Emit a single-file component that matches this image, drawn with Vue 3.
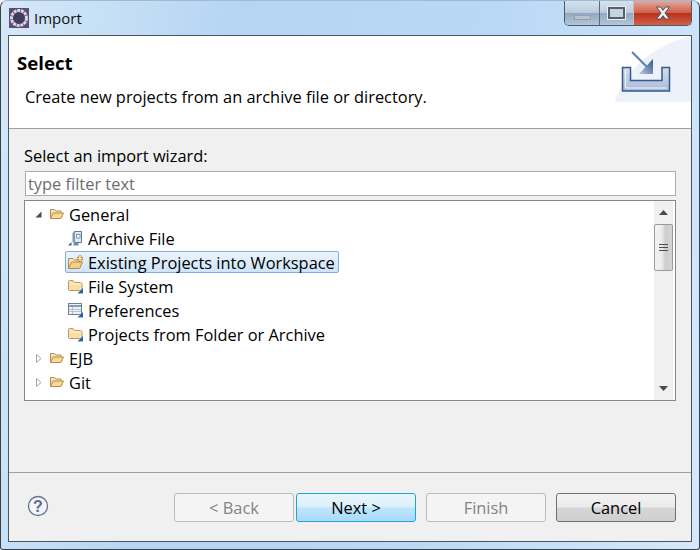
<script setup>
const rows = [
  { label: 'General', level: 0, twist: 'open', icon: 'openFolder' },
  { label: 'Archive File', level: 1, icon: 'archive' },
  { label: 'Existing Projects into Workspace', level: 1, icon: 'project', selected: true },
  { label: 'File System', level: 1, icon: 'folder' },
  { label: 'Preferences', level: 1, icon: 'prefs' },
  { label: 'Projects from Folder or Archive', level: 1, icon: 'folder' },
  { label: 'EJB', level: 0, twist: 'closed', icon: 'openFolder' },
  { label: 'Git', level: 0, twist: 'closed', icon: 'openFolder' }
]
</script>

<template>
  <div class="window">
    <div class="titlebar">
      <svg class="app-icon" width="20" height="20" viewBox="0 0 20 20">
        <rect width="20" height="20" fill="#5d4a7e" />
        <circle cx="10" cy="10" r="7.5" fill="none" stroke="#d8d8d4" stroke-width="3" stroke-dasharray="3 0.7" />
        <circle cx="10" cy="10" r="5.6" fill="#3f3d5c" />
      </svg>
      <span class="window-title">Import</span>
      <div class="controls">
        <div class="ctl ctl-min"><span class="min-glyph"></span></div>
        <div class="ctl ctl-max"><span class="max-glyph"></span></div>
        <div class="ctl ctl-close">
          <svg width="16" height="14" viewBox="0 0 16 14">
            <path d="M1.500 1h4l2.500 3.300L10.500 1h4L10 7l4.500 6h-4L8 9.700 5.500 13h-4L6 7z" fill="#eef0f2" stroke="#4a4f58" stroke-width="1" />
          </svg>
        </div>
      </div>
    </div>

    <div class="client">
      <header class="banner">
        <div class="banner-text">
          <h1>Select</h1>
          <p>Create new projects from an archive file or directory.</p>
        </div>
        <div class="banner-art">
          <svg width="76" height="66" viewBox="0 0 76 66">
            <defs>
              <linearGradient id="tray" x1="0" y1="0" x2="0" y2="1">
                <stop offset="0" stop-color="#d5deec" />
                <stop offset="1" stop-color="#a9bbd6" />
              </linearGradient>
              <linearGradient id="arrow" x1="0" y1="1" x2="1" y2="0">
                <stop offset="0" stop-color="#b8c8e0" />
                <stop offset="1" stop-color="#2f5590" />
              </linearGradient>
            </defs>
            <path d="M0 66 C6 42 30 12 76 0 V66z" fill="#edf1f9" />
            <path d="M7.500 31.500h8v13h31.500v-13h7.500v23.500h-47z" fill="url(#tray)" stroke="#35588f" stroke-width="1.500" />
            <path d="M10.500 34.500v17.500h41" fill="none" stroke="#eef2f8" stroke-width="1" />
            <path d="M17 16l15 15" stroke="#5d7cab" stroke-width="2" />
            <path d="M38 23v15H24z" fill="url(#arrow)" />
          </svg>
        </div>
      </header>

      <main class="body">
        <label class="field-label">Select an import wizard:</label>
        <div class="filter">type filter text</div>
        <div class="tree">
          <div class="tree-rows">
            <div v-for="row in rows" :key="row.label" class="row" :class="`level-${row.level}`">
              <span v-if="row.level === 0" class="twist">
                <svg width="9" height="9" viewBox="0 0 9 9">
                  <path v-if="row.twist === 'open'" d="M7.500 1.500v6h-6z" fill="#4a4a4a" />
                  <path v-else d="M2.500 0.500l4.500 4-4.500 4z" fill="#fff" stroke="#a6a6a6" />
                </svg>
              </span>
              <span class="cell" :class="{ selected: row.selected }">
                <span class="icon">
                  <svg width="16" height="16" viewBox="0 0 16 16">
                    <template v-if="row.icon === 'openFolder'">
                      <path d="M1.500 12.500v-9h4l1.500 1.500h5v2" fill="#f6e2bd" stroke="#bd8a45" />
                      <path d="M1.500 12.500l2.500-5.500h10.500l-2.500 5.500z" fill="#f7d99c" stroke="#bd8a45" />
                    </template>
                    <template v-else-if="row.icon === 'archive'">
                      <path d="M6.500 1.500h7v11h-7z" fill="#dfe8f2" stroke="#5f7895" />
                      <path d="M4.500 2.500h2.500v10H4.500z" fill="#7f97b5" />
                      <rect x="8.500" y="4.500" width="3.500" height="3.500" fill="#fff" stroke="#7f97b5" />
                      <path d="M0 15.500l3.500-3.500v3.500z" fill="#2a65b5" />
                      <path d="M5.500 13h5v2.500h-5z" fill="#6f8db3" />
                    </template>
                    <template v-else-if="row.icon === 'project'">
                      <path d="M0.500 14.500v-10h4.500l1.500 1.500h5v2" fill="#f6e2bd" stroke="#bd8a45" />
                      <path d="M0.500 14.500l3-6.500h11l-3 6.500z" fill="#f2cf8b" stroke="#bd8a45" />
                      <path d="M12 1.500v6M9 4.500h6" stroke="#a8782a" stroke-width="3" />
                      <path d="M12 2v5M9.500 4.500h5" stroke="#fff2a8" stroke-width="1.500" />
                    </template>
                    <template v-else-if="row.icon === 'folder'">
                      <path d="M1.500 12.500q-1 0-1-1v-8q0-1 1-1h3.500l1.500 2h6q1.500 0 1.500 1.500v6.500z" fill="#f8dfaa" stroke="#c39a5c" />
                      <path d="M1.500 6h12" stroke="#fdf3dc" />
                      <path d="M9.500 15.500l5.500-5.500v5.500z" fill="#2a65b5" />
                    </template>
                    <template v-else>
                      <rect x="0.500" y="1.500" width="13" height="11" fill="#eef1f6" stroke="#6d7f99" />
                      <path d="M1 4h12" stroke="#8a9bb4" stroke-width="2" />
                      <path d="M4.500 5v7M1 7.500h12M1 9.500h12" stroke="#b4c0d2" />
                      <path d="M9.500 15.500l5.500-5.500v5.500z" fill="#2a65b5" />
                    </template>
                  </svg>
                </span>
                <span class="row-label">{{ row.label }}</span>
              </span>
            </div>
          </div>
          <div class="scrollbar">
            <svg class="arrow" width="9" height="5" viewBox="0 0 9 5"><path d="M4.500 0L9 5H0z" fill="#4a4a4a" /></svg>
            <div class="thumb">
              <span></span><span></span><span></span>
            </div>
            <div class="track"></div>
            <svg class="arrow" width="9" height="5" viewBox="0 0 9 5"><path d="M4.500 5L9 0H0z" fill="#4a4a4a" /></svg>
          </div>
        </div>
      </main>

      <footer class="footer">
        <svg class="help" width="22" height="22" viewBox="0 0 22 22">
          <circle cx="11" cy="11" r="9.500" fill="#f4f5f8" stroke="#64748f" stroke-width="1.300" />
          <text x="11" y="16.500" text-anchor="middle" class="help-q">?</text>
        </svg>
        <div class="buttons">
          <button class="btn disabled">&lt; Back</button>
          <button class="btn primary">Next &gt;</button>
          <button class="btn disabled finish">Finish</button>
          <button class="btn cancel">Cancel</button>
        </div>
      </footer>
    </div>
  </div>
</template>

<style>
html, body { margin: 0; padding: 0; background: #fff; }
</style>

<style scoped>
.window {
  box-sizing: border-box;
  width: 700px;
  height: 550px;
  display: flex;
  flex-direction: column;
  padding: 0 7px 7px;
  border: 1px solid #3a4048;
  border-top-color: #9fb9d0;
  border-radius: 7px 7px 3px 3px;
  background: linear-gradient(100deg, #d5e8f8 0%, #b5d5f3 30%, #b9d8f5 62%, #d4e9fb 100%);
  font-family: "Open Sans", "Noto Sans", sans-serif;
  color: #000;
}
.titlebar {
  height: 34px;
  flex: none;
  display: flex;
  align-items: flex-start;
}
.app-icon { margin-top: 7px; margin-left: 1px; }
.window-title {
  margin-top: 7px;
  margin-left: 5px;
  font-size: 15px;
  line-height: 20px;
  color: #111;
}
.controls {
  margin-left: auto;
  display: flex;
  height: 24px;
  border: 1px solid #4c5a6a;
  border-top: 0;
  border-radius: 0 0 5px 5px;
  overflow: hidden;
}
.ctl {
  display: flex;
  align-items: center;
  justify-content: center;
  height: 24px;
}
.ctl-min {
  width: 34px;
  border-right: 1px solid #5c6b7c;
}
.ctl-max {
  width: 33px;
  border-right: 1px solid #d8b8b0;
}
.ctl-min, .ctl-max {
  background: linear-gradient(#d6e2ee 0%, #bccbdb 48%, #93a9bf 52%, #b4c6d8 100%);
}
.ctl-close {
  width: 57px;
  background: linear-gradient(#e3a79c 0%, #d0604c 48%, #b8321d 52%, #d2614a 100%);
}
.min-glyph {
  width: 17px;
  height: 5px;
  margin-top: 9px;
  background: #b5c2cf;
  border: 1px solid #8fa0b1;
  box-sizing: border-box;
}
.max-glyph {
  width: 17px;
  height: 12px;
  box-sizing: border-box;
  border: 2px solid #55606c;
  outline: 1px solid #e8eef4;
  background: #c6d3e0;
}
.client {
  flex: 1;
  min-height: 0;
  display: flex;
  flex-direction: column;
  border: 1px solid #4a5560;
  background: #f0f0f0;
}
.banner {
  height: 92px;
  flex: none;
  display: flex;
  justify-content: space-between;
  background: #fff;
  border-bottom: 1px solid #a0a0a0;
}
.banner-text { padding: 14px 0 0 8px; }
.banner h1 {
  margin: 0;
  font-size: 18.600px;
  line-height: 26px;
  font-weight: 700;
}
.banner p {
  margin: 10px 0 0 8px;
  font-size: 16.400px;
  line-height: 22px;
}
.banner-art { height: 66px; }
.banner-art svg { display: block; }
.body {
  flex: 1;
  min-height: 0;
  padding: 16px 15px 0;
  display: flex;
  flex-direction: column;
}
.field-label {
  font-size: 16.400px;
  line-height: 22px;
}
.filter {
  box-sizing: border-box;
  height: 25px;
  margin-left: 1px;
  margin-top: 4px;
  padding-left: 2px;
  border: 1px solid #acacac;
  background: #fff;
  color: #6d6d6d;
  font-size: 16.400px;
  line-height: 23px;
}
.tree {
  box-sizing: border-box;
  height: 201px;
  margin-top: 4px;
  display: flex;
  border: 1px solid #828790;
  background: #fff;
}
.tree-rows { flex: 1; padding-top: 1px; }
.row {
  height: 24px;
  display: flex;
  align-items: center;
  font-size: 16.400px;
}
.level-0 { padding-left: 9px; }
.level-1 { padding-left: 40px; }
.twist {
  width: 15px;
  display: flex;
  align-items: center;
}
.cell {
  box-sizing: border-box;
  height: 22px;
  display: flex;
  align-items: center;
  padding: 0 3px 0 2px;
  border: 1px solid transparent;
  border-radius: 2px;
}
.level-0 .cell { padding-left: 0; border-left: 0; }
.cell.selected {
  background: linear-gradient(#eaf4fd, #cfe4f9);
  border-color: #84acdd;
}
.icon {
  width: 16px;
  height: 16px;
  flex: none;
}
.icon svg { display: block; }
.row-label {
  margin-left: 4px;
  white-space: nowrap;
}
.scrollbar {
  width: 19px;
  flex: none;
  display: flex;
  flex-direction: column;
  align-items: center;
  background: #f0f0f0;
  margin-right: 2px;
  box-sizing: border-box;
}
.arrow { flex: none; margin: 9px 0; }
.thumb {
  box-sizing: border-box;
  width: 19px;
  height: 47px;
  flex: none;
  display: flex;
  flex-direction: column;
  align-items: center;
  justify-content: center;
  gap: 2px;
  border: 1px solid #9a9a9a;
  border-radius: 2px;
  background: linear-gradient(90deg, #f2f2f2 0%, #ececec 40%, #cdcdcd 60%, #d4d4d4 100%);
}
.thumb span {
  width: 9px;
  height: 1px;
  background: #4f4f4f;
}
.track { flex: 1; }
.footer {
  height: 69px;
  flex: none;
  box-sizing: border-box;
  display: flex;
  align-items: flex-start;
  border-top: 1px solid #a0a0a0;
  padding: 20px 15px 0 18px;
}
.help { margin-top: 2px; }
.help-q {
  font-family: "Liberation Sans", sans-serif;
  font-size: 16px;
  font-weight: 700;
  fill: #566c92;
}
.buttons {
  margin-left: auto;
  display: flex;
}
.btn {
  box-sizing: border-box;
  width: 120px;
  height: 29px;
  padding: 0;
  border-radius: 3px;
  font-family: inherit;
  font-size: 16.400px;
  color: #000;
  border: 1px solid #707070;
  background: linear-gradient(#f3f3f3 0%, #ebebeb 48%, #d6d6d6 52%, #cfcfcf 100%);
}
.btn.disabled {
  border-color: #bbbbbb;
  background: #f4f4f4;
  color: #838383;
}
.btn.primary {
  margin-left: 2px;
  border-color: #26a0da;
  background: linear-gradient(#e9f6fd 0%, #d9f0fc 48%, #bee6fd 52%, #a9dbf6 100%);
}
.btn.finish { margin-left: 10px; }
.btn.cancel { margin-left: 10px; }
</style>
